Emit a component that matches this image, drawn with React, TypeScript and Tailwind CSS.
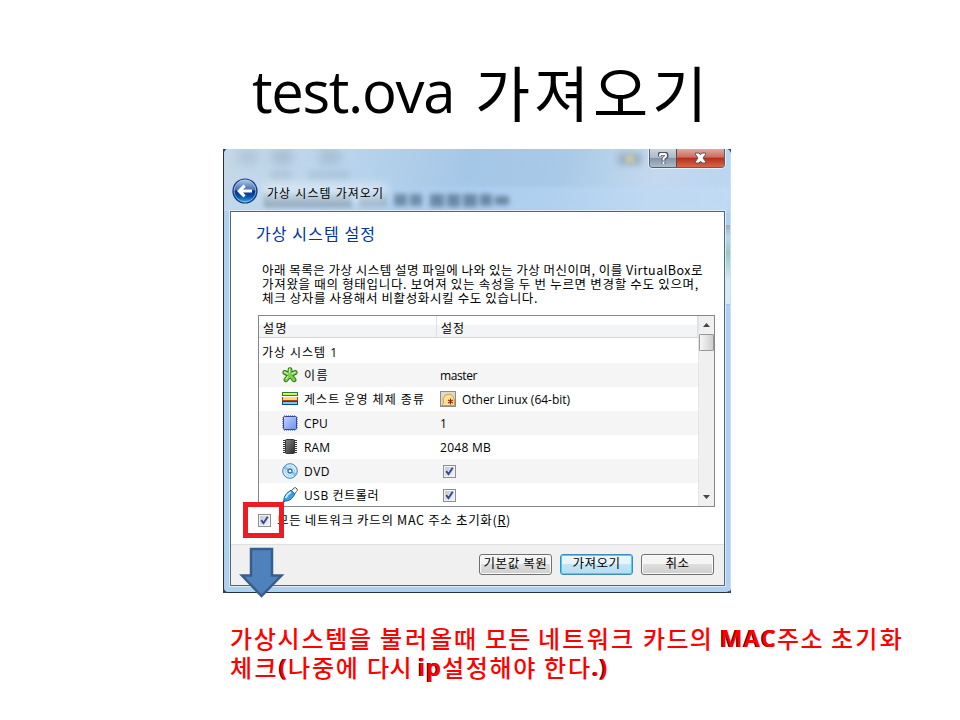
import { useLayoutEffect, useRef, useState } from "react";
import type { ReactNode } from "react";

const SANS = "font-['Open_Sans','Noto_Sans_CJK_KR',sans-serif]";
const KR = "font-['Noto_Sans_CJK_KR',sans-serif]";

// A run of text tracked so that it fills exactly `w` pixels.
function Fit({ w, className = "", children }: { w: number; className?: string; children: ReactNode }) {
  const ref = useRef<HTMLSpanElement>(null);
  const [spacing, setSpacing] = useState(0);
  useLayoutEffect(() => {
    const el = ref.current;
    if (!el) return;
    el.style.letterSpacing = "0px";
    const count = Array.from(el.textContent ?? "").length;
    const next = (w - el.getBoundingClientRect().width) / count;
    el.style.letterSpacing = `${next}px`;
    setSpacing(next);
  }, [w]);
  return (
    <span ref={ref} className={`inline-block shrink-0 whitespace-pre ${className}`} style={{ letterSpacing: spacing }}>
      {children}
    </span>
  );
}

function Check() {
  return (
    <span className="flex size-[13px] shrink-0 items-center justify-center border border-[#8e8f8f] bg-[#f4f4f4]">
      <span className="flex size-[9px] items-center justify-center bg-gradient-to-br from-[#c3c9d1] to-[#f3f5f8]">
        <svg width="9" height="9" viewBox="0 0 9 9" fill="none">
          <path d="M1.2 4.2 3.5 7.2 7.7 .8" stroke="#35478f" strokeWidth="1.9" />
        </svg>
      </span>
    </span>
  );
}

function NameIcon() {
  return (
    <svg width="16" height="16" viewBox="0 0 16 16">
      <g stroke="#2c7618" strokeWidth="4.8" strokeLinecap="round">
        <path d="M8 8V2.600M8 8 2.800 5.500M8 8l5.200-2.500M8 8l-4 4.800M8 8l4 4.800" />
      </g>
      <g stroke="#7ccb4b" strokeWidth="3" strokeLinecap="round">
        <path d="M8 8V2.600M8 8 2.800 5.500M8 8l5.200-2.500M8 8l-4 4.800M8 8l4 4.800" />
      </g>
      <path d="M7.500 1.800v4M2.200 5l4 2M13.400 5l-3.800 2M4 11.800l2-2.500" stroke="#d3f6b0" strokeWidth="1.1" />
    </svg>
  );
}

function OsIcon() {
  return (
    <svg width="16" height="16" viewBox="0 0 16 16" shapeRendering="crispEdges">
      <path fill="#277f32" d="M0 1h16v4H0z" /><path fill="#d5ef6a" d="M1 2h14v2H1z" />
      <path fill="#a8471a" d="M0 6h16v4H0z" /><path fill="#ffdc71" d="M1 6h14v3H1z" />
      <path fill="#0c4b87" d="M0 10h16v4H0z" /><path fill="#7cc8ea" d="M1 11h14v2H1z" />
    </svg>
  );
}

function ChipIcon({ dark = false }: { dark?: boolean }) {
  const edge = dark ? "#383838" : "#3447a0";
  return (
    <svg width="16" height="16" viewBox="0 0 16 16">
      <defs>
        <linearGradient id={dark ? "ram" : "cpu"} x1="0" y1="0" x2="1" y2="1">
          <stop stopColor={dark ? "#858585" : "#c3d4ff"} />
          <stop offset="1" stopColor={dark ? "#2b2b2b" : "#6f8ef2"} />
        </linearGradient>
      </defs>
      <path stroke={edge} strokeWidth={dark ? 14 : 15} strokeDasharray="1 1" d={dark ? "M8 1v14" : "M8 2v12"} />
      {!dark && <path stroke={edge} strokeWidth="15" strokeDasharray="1 1" d="M2 8h12" />}
      <rect x={dark ? 3.5 : 1.5} y={dark ? .5 : 1.5} width={dark ? 9 : 13} height={dark ? 14 : 13} rx="1" fill={`url(#${dark ? "ram" : "cpu"})`} stroke={edge} />
    </svg>
  );
}

function DiscIcon() {
  return (
    <svg width="16" height="16" viewBox="0 0 16 16">
      <circle cx="8" cy="8" r="7.3" fill="#d9ebfa" stroke="#3d7eb8" />
      <path d="M8 8 3.6 2.6A7 7 0 0 0 1.3 6ZM8 8l4.4 5.4a7 7 0 0 0 2.3-3.4Z" fill="#7fbdeb" />
      <circle cx="8" cy="8" r="4.6" fill="none" stroke="#a9cfec" />
      <circle cx="8" cy="8" r="2.7" fill="#2776ba" /><circle cx="8" cy="8" r="1.3" fill="#fff" />
    </svg>
  );
}

function UsbIcon() {
  return (
    <svg width="16" height="16" viewBox="0 0 16 16">
      <path d="m9.500 3.500 2.800-2.700q1.500-.6 2.700 1.200t-.5 2.500L12.500 7" fill="#fff" stroke="#454b50" />
      <path d="M.8 15.500 2 13C1.600 9.500 5 5.500 9 3.300l3.700 3.500C11.500 10.500 8 14 3.500 14Z" fill="#3d9ee7" stroke="#155696" />
      <path d="M3.600 11C4.500 8.500 6.700 6.300 9 5" stroke="#c4edff" strokeWidth="2" fill="none" />
    </svg>
  );
}

function LinuxIcon() {
  return (
    <svg width="16" height="16" viewBox="0 0 16 16">
      <rect x=".5" y=".5" width="15" height="15" fill="#ddd9d2" stroke="#8f8c88" />
      <path d="M1.500 14.500 3.500 12 3 8l2.500-4L8 3.500 10 3l3 2.500L14.500 9v5.500Z" fill="#ffe09a" stroke="#dc9a2e" />
      <path d="M10.500 7.500v6M8 9l5 3M13 9l-5 3" stroke="#8b2b12" strokeWidth="1.1" />
    </svg>
  );
}

function Row({ icon, name, nameW, shaded = false, children }: { icon: ReactNode; name: string; nameW: number; shaded?: boolean; children: ReactNode }) {
  return (
    <div className={`flex h-6 shrink-0 items-center ${shaded ? "bg-[#f5f5f5]" : "bg-white"}`}>
      <div className="flex w-[181px] shrink-0 items-center gap-[6px] pl-[23px]">
        {icon}
        <Fit w={nameW} className="pt-[2px]">{name}</Fit>
      </div>
      {children}
    </div>
  );
}

function Caption() {
  const bold = "font-['Open_Sans',sans-serif] font-bold [text-shadow:-1px_0_0_#300]";
  return (
    <div className={`mt-[30px] ml-[230px] text-[24px] font-medium leading-[29px] text-[#ff0000] ${KR}`}>
      <div className="flex h-[29px]">
        <Fit w={150}>가상시스템을 </Fit><Fit w={50}>불러</Fit><Fit w={55}>올때 </Fit><Fit w={53}>모든 </Fit>
        <Fit w={105}>네트워크 </Fit><Fit w={77}>카드의 </Fit><Fit w={57} className={bold}>MAC</Fit>
        <Fit w={54}>주소 </Fit><Fit w={73}>초기화</Fit>
      </div>
      <div className="flex h-[29px]">
        <Fit w={49}>체크</Fit><Fit w={9} className={bold}>(</Fit><Fit w={79}>나중에 </Fit><Fit w={51}>다시 </Fit>
        <Fit w={24} className={bold}>ip</Fit><Fit w={102}>설정해야 </Fit><Fit w={48}>한다</Fit>
        <Fit w={16} className={bold}>.)</Fit>
      </div>
    </div>
  );
}

export default function App() {
  return (
    <main className="relative h-[720px] w-[960px] overflow-hidden bg-white">
      <h1 className="flex h-[149px] items-start gap-[22px] pt-[51px] pl-[252px] leading-[80px] text-black">
        <Fit w={202} className="font-['Open_Sans',sans-serif] text-[58px]">test.ova</Fit>
        <Fit w={236} className={`-ml-[1px] text-[60px] ${KR}`}>가져오기</Fit>
      </h1>

      <div className="ml-[223px] h-[444px] w-[508px] bg-[#3a3f45]">
        <section className={`relative flex h-[444px] w-[508px] flex-col overflow-hidden rounded-[5px] border border-t-0 border-[#25313d] border-r-[#c8e0f5] bg-[#aed0f1] ${SANS} text-[12px] text-black`}>
          <header className="relative flex h-[62px] shrink-0 items-end bg-[linear-gradient(100deg,#c5d8e9_0%,#bbd5ed_22%,#a5c7e7_48%,#a8c9e7_66%,#c4d9ee_84%,#bad5ef_100%)] pb-[4px] pl-[8px]">
            <div className="absolute inset-x-0 top-[38px] bottom-0 bg-[linear-gradient(90deg,#c7e0f700,#afd1f3_50%,#c4ddf6)] opacity-70 blur-[2px]" />
            <div className="absolute top-[45px] left-[40px] flex h-[13px] gap-[7px] opacity-55 blur-[2.500px]">
              <div className="h-[13px] w-[88px] bg-[#4d6880]" /><div className="h-[12px] w-[28px] bg-[#68829a]" />
              <div className="flex w-[29px] gap-[3px]"><div className="h-[12px] w-[13px] bg-[#3b5873]" /><div className="h-[12px] w-[12px] bg-[#3b5873]" /></div>
              <div className="flex gap-[3px]">
                <div className="h-[13px] w-[14px] bg-[#35506a]" /><div className="h-[13px] w-[13px] bg-[#35506a]" /><div className="h-[13px] w-[14px] bg-[#35506a]" /><div className="h-[12px] w-[12px] bg-[#35506a]" /><div className="mt-[2px] h-[9px] w-[14px] bg-[#35506a]" />
              </div>
            </div>
            <div className="absolute top-0 left-3 h-4 w-6 rounded-full bg-[#839cac] opacity-25 blur-[4px]" />
            <div className="absolute top-0 left-[46px] h-4 w-6 rounded-full bg-[#839cac] opacity-35 blur-[4px]" />
            <div className="absolute top-0 left-[94px] h-4 w-6 rounded-full bg-[#839cac] opacity-35 blur-[4px]" />
            <div className="absolute top-[22px] left-[46px] h-2 w-[22px] bg-[#839cac] opacity-30 blur-[3px]" />
            <div className="absolute top-[22px] left-[84px] h-2 w-[42px] bg-[#839cac] opacity-30 blur-[3px]" />
            <div className="absolute top-[4px] left-[394px] h-3 w-6 bg-[#8192a0] opacity-50 blur-[3px]" />
            <div className="absolute top-[6px] left-[402px] size-2 bg-[#d4cc9c] opacity-80 blur-[2px]" />
            <div className="absolute top-[34px] left-[39px] h-5 w-[124px] bg-[#e8f0f7] opacity-60 blur-[5px]" />
            <svg className="relative mb-[3px]" width="26" height="26" viewBox="0 0 26 26">
              <defs><linearGradient id="back" x2="0" y2="1"><stop stopColor="#b5cdec" /><stop offset=".46" stopColor="#3f6db4" /><stop offset=".5" stopColor="#062c80" /><stop offset=".75" stopColor="#0d55ad" /><stop offset="1" stopColor="#35b5f5" /></linearGradient></defs>
              <circle cx="13" cy="13" r="12" fill="url(#back)" stroke="#163d78" strokeWidth="1.2" /><circle cx="13" cy="13" r="10.8" fill="none" stroke="#a5cbef" strokeWidth=".7" />
              <path d="m5 13 6.500-6.500 2.200 2.200-2.700 2.700h9v3.200h-9l2.700 2.700-2.200 2.200Z" fill="#fff" />
            </svg>
            <div className="relative mb-1 ml-[9px] leading-[18px]"><Fit w={117}>가상 시스템 가져오기</Fit></div>
            <div className="absolute top-0 right-[5px] flex h-[19px] w-[76px] overflow-hidden rounded-b-[4px] border border-t-0 border-[#53606d] shadow-[0_0_0_1px_#e4eef8]">
              <div className="flex w-[27px] items-center justify-center border-r border-[#6c4248] bg-[linear-gradient(#cbd4dc,#aeb9c5_48%,#8293a5_50%,#acbccb)]">
                <svg width="11" height="13" viewBox="0 0 11 13" fill="none">
                  <path d="M1.500 4.500V3q0-1.500 1.500-1.500h4Q8.500 1.500 8.500 3v1.500L5.500 6.800V8.700M5.500 10v2" stroke="#485463" strokeWidth="3.800" />
                  <path d="M2 4.300V3q0-1 1-1h4q1 0 1 1v1.300L5.500 6.500V8.500M5.500 10v2" stroke="#fff" strokeWidth="1.900" />
                </svg>
              </div>
              <div className="flex flex-1 items-center justify-center bg-[linear-gradient(#dfaaa3,#cc6b5d_46%,#b62c18_50%,#d7674c)]">
                <svg width="13" height="12" viewBox="0 0 13 12"><path d="M1.500 1h3.600l1.400 1.800L7.900 1h3.600v1.600L9 6l2.500 3.400V11H7.900L6.500 9.200 5.100 11H1.500V9.400L4 6 1.500 2.600Z" fill="#fff" stroke="#565666" /></svg>
              </div>
            </div>
          </header>

          <div className="absolute top-[76px] right-[0px] h-[80px] w-[4px] bg-[linear-gradient(#9dabb9,#b8d8f2_15%,#9ac9b9_35%,#d6eaf8_70%,#d6eaf8_98%,#72b9df)]" />
          <div className="relative ml-[6px] flex h-[375px] w-[495px] shrink-0 flex-col border border-[#536579] bg-white shadow-[0_0_0_1px_#dcebf8]">
            <div className={`h-[47px] shrink-0 pt-[11px] pl-[25px] text-[16px] leading-5 text-[#003399] ${KR}`}><Fit w={120}>가상 시스템 설정</Fit></div>
            <div className={`flex h-[56px] shrink-0 flex-col pt-[4px] pl-[31px] text-[12.5px] leading-[14px] ${KR}`}>
              <Fit w={441} className="w-max">아래 목록은 가상 시스템 설명 파일에 나와 있는 가상 머신이며, 이를 VirtualBox로</Fit>
              <Fit w={437} className="w-max">가져왔을 때의 형태입니다. 보여져 있는 속성을 두 번 누르면 변경할 수도 있으며,</Fit>
              <Fit w={276} className="w-max">체크 상자를 사용해서 비활성화시킬 수도 있습니다.</Fit>
            </div>

            <div className="ml-[27px] flex h-[192px] w-[457px] shrink-0 overflow-hidden border border-[#828790] bg-white">
              <div className="flex w-[439px] shrink-0 flex-col">
                <div className="flex h-[22px] shrink-0 items-center border-b border-[#d5d5d5] bg-[linear-gradient(#fff_42%,#f3f4f6_43%)]">
                  <div className="flex h-full w-[178px] items-center border-r border-[#dedfe1] pt-1 pl-[4px]"><Fit w={25}>설명</Fit></div>
                  <div className="flex h-full flex-1 items-center border-r border-[#dedfe1] pt-1 pl-[4px]"><Fit w={24}>설정</Fit></div>
                </div>
                <div className="flex h-[25px] shrink-0 items-center pt-1 pl-[3px]"><Fit w={76}>가상 시스템 1</Fit></div>
                <Row shaded icon={<NameIcon />} name="이름" nameW={25}><Fit w={37} className="pt-[2px]">master</Fit></Row>
                <Row icon={<OsIcon />} name="게스트 운영 체제 종류" nameW={121}><div className="flex items-center gap-[6px]"><LinuxIcon /><Fit w={108} className="pt-[2px]">Other Linux (64-bit)</Fit></div></Row>
                <Row shaded icon={<ChipIcon />} name="CPU" nameW={24}><span className="pt-[2px]">1</span></Row>
                <Row icon={<ChipIcon dark />} name="RAM" nameW={26}><Fit w={51} className="pt-[2px]">2048 MB</Fit></Row>
                <Row shaded icon={<DiscIcon />} name="DVD" nameW={26}><div className="pl-[3px]"><Check /></div></Row>
                <Row icon={<UsbIcon />} name="USB 컨트롤러" nameW={75}><div className="pl-[3px]"><Check /></div></Row>
              </div>
              <div className="flex w-4 flex-col items-center border-l border-[#e4e4e4] bg-[#f0f0f0]">
                <div className="flex h-[18px] items-center"><svg width="7" height="4"><path d="M0 4 3.500 0 7 4Z" fill="#444" /></svg></div>
                <div className="h-[17px] w-[15px] rounded-[1px] border border-[#999] bg-gradient-to-r from-[#f7f7f7] to-[#cecece]" />
                <div className="mt-auto flex h-[18px] items-center"><svg width="7" height="4"><path d="M0 0 3.500 4 7 0Z" fill="#444" /></svg></div>
              </div>
            </div>

            <div className="flex h-[37px] shrink-0 items-start gap-[6px] pt-[6px] pl-[27px]">
              <div className="pt-[1px]"><Check /></div>
              <Fit w={234} className={`-mt-[1px] text-[12.5px] leading-4 ${KR}`}>모든 네트워크 카드의 MAC 주소 초기화(<u>R</u>)</Fit>
            </div>
            <footer className={`flex flex-1 justify-end gap-[8px] border-t border-[#dfdfdf] bg-[#f0f0f0] pt-[9px] pr-[10px] text-[12.5px] ${KR}`}>
              <button className="flex h-[21px] w-[73px] items-center justify-center rounded-[3px] border border-[#707070] bg-[linear-gradient(#f4f4f4_48%,#dddddd_50%,#cfcfcf)] pb-[3px] shadow-[inset_0_0_0_1px_#fafafa]"><Fit w={64}>기본값 복원</Fit></button>
              <button className="flex h-[21px] w-[73px] items-center justify-center rounded-[3px] border border-[#3c8db9] bg-[linear-gradient(#e8f5fc_48%,#c5e4f5_50%,#b4dcf1)] pb-[3px] shadow-[inset_0_0_0_1px_#42d2f8]"><Fit w={48}>가져오기</Fit></button>
              <button className="flex h-[21px] w-[73px] items-center justify-center rounded-[3px] border border-[#707070] bg-[linear-gradient(#f4f4f4_48%,#dddddd_50%,#cfcfcf)] pb-[3px] shadow-[inset_0_0_0_1px_#fafafa]"><Fit w={24}>취소</Fit></button>
            </footer>
          </div>
        </section>
      </div>

      <Caption />
      <div className="absolute top-[502px] left-[243px] h-[36px] w-[41px] border-5 border-[#ed1c24]" />
      <svg className="absolute top-[547px] left-[239px]" width="46" height="52" viewBox="0 0 46 52">
        <path d="M12 2h21v26.500h9.500L22.500 49 3 28.500h9Z" fill="#4f81bd" stroke="#385d8a" strokeWidth="2.500" />
      </svg>
    </main>
  );
}
